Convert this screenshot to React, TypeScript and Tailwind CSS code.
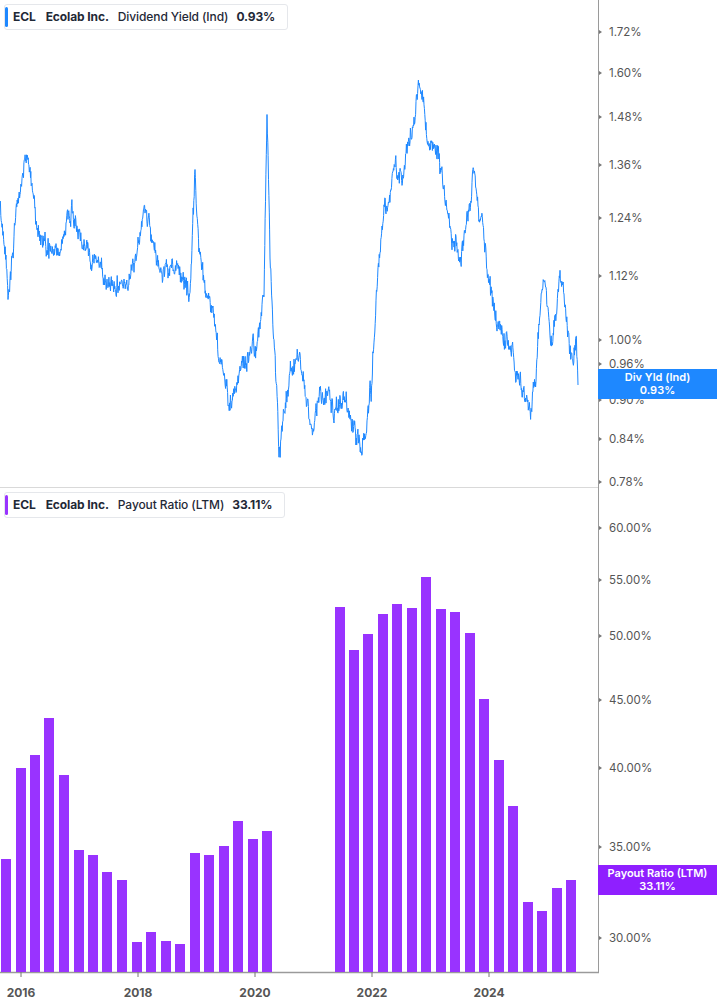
import React from 'react';

const bars: [number, number][] = [
  [1, 859], [16, 768], [30, 755], [44, 718], [59, 775], [74, 850], [88, 855], [102, 872], [117, 880],
  [132, 942], [146, 932], [161, 941], [175, 944], [190, 853], [204, 855], [219, 846], [233, 821], [248, 839], [262, 831],
  [335, 607], [349, 650], [363, 634], [378, 614], [392, 604], [407, 608], [421, 577], [436, 609], [450, 612],
  [465, 633], [479, 699], [494, 760], [508, 806], [523, 902], [537, 911], [552, 888], [566, 880],
];

const keys: [number, number][] = [
  [0, 210], [4, 250], [8, 290], [14, 230], [22, 170], [27, 155], [32, 185], [38, 230], [45, 240], [52, 255], [60, 250],
  [68, 220], [75, 212], [82, 240], [90, 250], [98, 265], [105, 282], [118, 278], [130, 282], [140, 240], [145, 205],
  [152, 240], [160, 270], [168, 262], [175, 268], [182, 290], [190, 300], [195, 180], [200, 260], [207, 300], [215, 330],
  [222, 370], [230, 402], [240, 370], [250, 360], [258, 340], [264, 290], [267, 110], [270, 260], [274, 340], [279, 452],
  [285, 400], [292, 375], [300, 350], [306, 400], [312, 420], [320, 390], [328, 400], [336, 410], [345, 395], [352, 425],
  [361, 455], [367, 420], [372, 380], [376, 290], [382, 230], [388, 200], [395, 175], [402, 170], [410, 140], [418, 92],
  [424, 120], [430, 150], [438, 160], [445, 195], [452, 230], [460, 255], [468, 215], [474, 175], [480, 220], [487, 260],
  [492, 300], [497, 325], [504, 335], [511, 345], [518, 380], [524, 395], [531, 415], [536, 380], [540, 320], [544, 270],
  [548, 300], [552, 355], [557, 300], [560, 262], [564, 300], [568, 350], [573, 355], [576, 340], [578, 385],
];

let seed = 11;
const rnd = () => {
  seed = (seed * 16807) % 2147483647;
  return seed / 2147483647 - 0.5;
};

const linePts: string[] = [];
let walk = 0;
for (let i = 0; i < keys.length - 1; i++) {
  const [x0, y0] = keys[i];
  const [x1, y1] = keys[i + 1];
  const steps = Math.max(2, Math.round((x1 - x0) * 2.5));
  for (let s = 0; s < steps; s++) {
    const t = s / steps;
    walk = walk * 0.8 + rnd() * 14;
    const x = x0 + (x1 - x0) * t;
    const y = y0 + (y1 - y0) * t + walk + rnd() * 10;
    linePts.push(`${x.toFixed(1)},${y.toFixed(1)}`);
  }
}
linePts.push('578,385');

const topTicks: [string, number][] = [
  ['1.72%', 32], ['1.60%', 73], ['1.48%', 117], ['1.36%', 165], ['1.24%', 218], ['1.12%', 276],
  ['1.00%', 340], ['0.96%', 364], ['0.90%', 400], ['0.84%', 439], ['0.78%', 482],
];
const botTicks: [string, number][] = [
  ['60.00%', 528], ['55.00%', 580], ['50.00%', 636], ['45.00%', 700], ['40.00%', 768], ['35.00%', 847], ['30.00%', 938],
];
const years: [string, number][] = [['2016', 21], ['2018', 138], ['2020', 255], ['2022', 372], ['2024', 489]];

function Legend({ color, name, value }: { color: string; name: string; value: string }) {
  return (
    <div className="flex items-center h-[26px] bg-white border border-[#e5e7eb] rounded-[3px] text-[12px] text-[#1f2937] pr-3 tracking-[-0.1px]">
      <div className={`w-[3px] h-[20px] rounded-sm ${color}`} />
      <span className="ml-[5px] font-bold">ECL</span>
      <span className="ml-[10px] font-bold">Ecolab Inc.</span>
      <span className="ml-[9px] font-medium">{name}</span>
      <span className="ml-[8px] font-bold">{value}</span>
    </div>
  );
}

export default function App() {
  return (
    <div className="relative w-[717px] h-[1005px] bg-white overflow-hidden" style={{ fontFamily: 'Inter, "Liberation Sans", sans-serif' }}>
      <svg width="717" height="1005" className="block">
        <line x1="0" y1="487.5" x2="598" y2="487.5" stroke="#d9d9d9" />
        <line x1="598.5" y1="0" x2="598.5" y2="972" stroke="#9a9a9a" />
        <line x1="0" y1="972.5" x2="599" y2="972.5" stroke="#9a9a9a" strokeWidth="1.5" />
        <polyline points={linePts.join(' ')} fill="none" stroke="#1e88ff" strokeWidth="1" />
        {bars.map(([x, y], i) => (
          <rect key={i} x={x} y={y} width="10" height={972 - y} fill="#9933ff" />
        ))}
        {topTicks.concat(botTicks).map(([t, y]) => (
          <g key={t}>
            <path d={`M599 ${y - 2} L602 ${y} L599 ${y + 2}Z`} fill="#777" />
            <text x="609" y={y + 4} fontSize="11.5" fill="#555" fontFamily="Inter, sans-serif">{t}</text>
          </g>
        ))}
        {years.map(([t, x]) => (
          <g key={t}>
            <line x1={x} y1="972" x2={x} y2="977" stroke="#777" />
            <text x={x} y="997" fontSize="12" fontWeight="700" fill="#555" textAnchor="middle" fontFamily="Inter, sans-serif">{t}</text>
          </g>
        ))}
      </svg>

      <div className="absolute left-[4px] top-[4px]">
        <Legend color="bg-[#1e88ff]" name="Dividend Yield (Ind)" value="0.93%" />
      </div>
      <div className="absolute left-[4px] top-[492px]">
        <Legend color="bg-[#9933ff]" name="Payout Ratio (LTM)" value="33.11%" />
      </div>

      <div className="absolute left-[598px] top-[369px] w-[119px] h-[30px] bg-[#1e88ff] text-white text-[11px] font-semibold leading-[13px] flex flex-col items-center justify-center">
        <span>Div Yld (Ind)</span>
        <span>0.93%</span>
      </div>
      <div className="absolute left-[598px] top-[865px] w-[119px] h-[30px] bg-[#8f1fff] text-white text-[11px] font-semibold leading-[13px] flex flex-col items-center justify-center">
        <span>Payout Ratio (LTM)</span>
        <span>33.11%</span>
      </div>
    </div>
  );
}
